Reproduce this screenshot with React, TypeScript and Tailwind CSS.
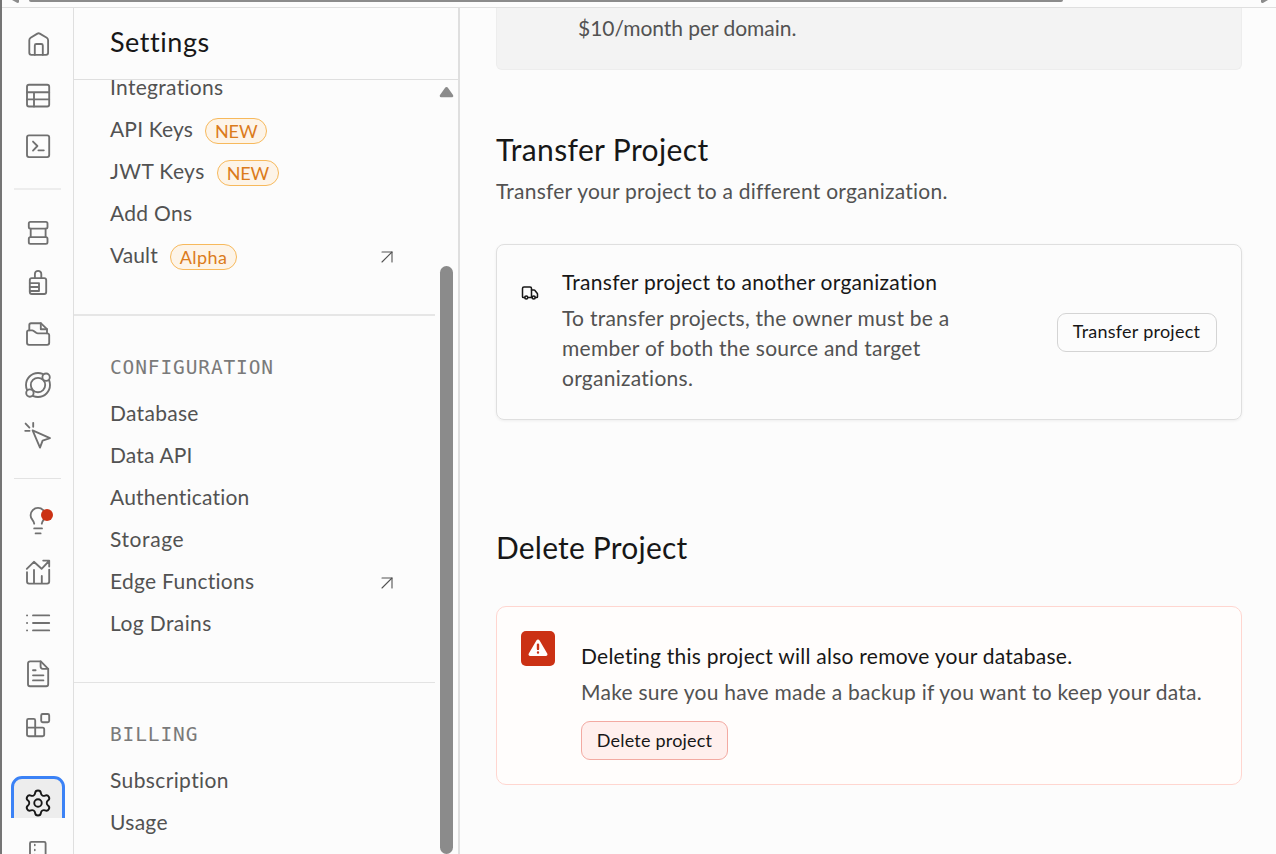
import type { ReactNode } from "react";
import { ArrowUpRight, Settings, Truck } from "lucide-react";

function RailIcon({ children }: { children: ReactNode }) {
  return (
    <svg
      width="30"
      height="30"
      viewBox="0 0 30 30"
      fill="none"
      stroke="#707070"
      strokeWidth="1.85"
      strokeLinecap="round"
      strokeLinejoin="round"
      className="shrink-0"
    >
      {children}
    </svg>
  );
}

function Rail() {
  return (
    <nav className="flex w-[72px] shrink-0 flex-col items-center overflow-hidden border-r border-[#dfdfdf] pt-[21px]">
      <div className="flex flex-col gap-[21px]">
        <RailIcon>
          <path d="M8.3 25.8 A2 2 0 0 1 6.3 23.8 V11.2 Q6.3 9.7 7.6 8.8 L14.4 4.6 Q15.6 3.9 16.8 4.6 L23.8 8.8 Q25.1 9.7 25.1 11.2 V23.8 A2 2 0 0 1 23.1 25.8 Z" />
          <path d="M11.8 25.8 V16.5 A1.5 1.5 0 0 1 13.3 15 H18.3 A1.5 1.5 0 0 1 19.8 16.5 V25.8" />
        </RailIcon>
        <RailIcon>
          <rect x="4" y="4.7" width="22.2" height="21.8" rx="2" />
          <path d="M4 12.2 H26.2 M4 19.4 H26.2 M11 12.2 V26.5" />
        </RailIcon>
        <RailIcon>
          <rect x="4" y="4.3" width="22.2" height="21.8" rx="2" />
          <path d="M10 10.6 L14.4 15 L10 19.6 M15.4 19.3 H20.8" />
        </RailIcon>
      </div>
      <div className="mt-[27px] h-[2px] w-[47px] shrink-0 bg-[#ededed]" />
      <div className="mt-[27px] flex flex-col gap-[21px]">
        <RailIcon>
          <rect x="5.8" y="4.8" width="18.7" height="6.8" rx="1.6" />
          <path d="M7.7 11.6 V20.1 M22.6 11.6 V20.1" />
          <rect x="5.8" y="20.1" width="18.7" height="6.7" rx="1.6" />
        </RailIcon>
        <RailIcon>
          <rect x="6.8" y="10.1" width="16.4" height="15.9" rx="2" />
          <path d="M11.9 10 V6 A3.2 3.2 0 0 1 18.3 6 V10 M6.8 15.1 H16 V23 H6.8 M6.8 19 H16" />
        </RailIcon>
        <RailIcon>
          <path d="M6.3 11.3 V6 A1.8 1.8 0 0 1 8.1 4.2 H17.8 L24 10.2 V14.3" />
          <path d="M17.8 4.2 V10.2 H24" />
          <path d="M4 13.2 A1.8 1.8 0 0 1 5.8 11.4 H9.2 Q10 11.4 10.7 11.9 L13.2 13.8 Q13.9 14.3 14.8 14.3 H24.2 A2 2 0 0 1 26.2 16.3 V23.8 A2 2 0 0 1 24.2 25.8 H6 A2 2 0 0 1 4 23.8 Z" />
        </RailIcon>
        <RailIcon>
          <circle cx="15" cy="15" r="12" />
          <circle cx="15" cy="15" r="7.2" />
          <circle cx="23.1" cy="7.2" r="3.7" fill="#fcfcfc" />
          <circle cx="6.9" cy="23" r="3.7" fill="#fcfcfc" />
        </RailIcon>
        <RailIcon>
          <path d="M9.6 9.4 L27 17.2 L19.6 19.6 L17 26.6 Z" />
          <path d="M10.2 1.8 V5.8 M2.2 9.8 H6.6 M2.6 2.6 L6.4 6.6" />
        </RailIcon>
      </div>
      <div className="mt-[27px] h-px w-[47px] shrink-0 bg-[#e3e3e3]" />
      <div className="mt-[27px] flex flex-col gap-[21px]">
        <div className="relative">
          <RailIcon>
            <path d="M11.2 17.6 C11.1 15.8 10.3 14.9 9.3 13.7 C8.2 12.4 7.6 11 7.6 9.3 A7.4 7.4 0 0 1 22.4 9.3 C22.4 11 21.8 12.4 20.7 13.7 C19.7 14.9 18.9 15.8 18.8 17.6" />
            <path d="M11.2 22.4 H19 M12.6 27.4 H17.6" />
          </RailIcon>
          <span className="absolute top-[3px] left-[18px] size-3 rounded-full bg-[#cb3114]" />
        </div>
        <RailIcon>
          <path d="M4 15.2 V24.6 A2 2 0 0 0 6 26.6 H24.2 A2 2 0 0 0 26.2 24.6 V12.6 M11 13 V26.6 M18.8 19 V26.6" />
          <path d="M3.8 11.8 L10.9 4.8 L18.6 11.8 L26 4 M20.2 3.6 H26.2 V9.6" />
        </RailIcon>
        <RailIcon>
          <path d="M4 7.4 H4.1 M4 15 H4.1 M4 22.4 H4.1 M10 7.4 H26.2 M10 15 H26.2 M10 22.4 H26.2" />
        </RailIcon>
        <RailIcon>
          <path d="M17.8 2.4 H7 A2 2 0 0 0 5 4.4 V25.2 A2 2 0 0 0 7 27.2 H23.2 A2 2 0 0 0 25.2 25.2 V9.8 Z" />
          <path d="M17.6 2.4 V7.6 A2.2 2.2 0 0 0 19.8 9.8 H25.2 M10 11.2 H12.6 M10 16.3 H20.4 M10 21.4 H20.4" />
        </RailIcon>
        <RailIcon>
          <rect x="18.2" y="4" width="8" height="8.2" rx="1.4" />
          <path d="M12.2 17.6 V10.4 A1.5 1.5 0 0 0 10.7 8.9 H5.5 A1.5 1.5 0 0 0 4 10.4 V24.6 A1.6 1.6 0 0 0 5.6 26.2 H19.6 A1.6 1.6 0 0 0 21.2 24.6 V19.2 A1.6 1.6 0 0 0 19.6 17.6 H4 M12.2 17.6 V26.2" />
        </RailIcon>
      </div>
      <div className="mt-9 h-[42px] w-[54px] shrink-0 overflow-hidden">
        <div className="flex h-[54px] items-center justify-center rounded-[11px] border-[3px] border-[#3b82f6] bg-[#ededed]">
          <Settings size={30} strokeWidth={1.5} className="text-[#171717]" />
        </div>
      </div>
      <div className="mt-[19px] h-[17px] shrink-0 overflow-hidden">
        <RailIcon>
          <rect x="7" y="4.8" width="15.6" height="22" rx="1.4" />
          <path d="M11.8 7.6 V24" strokeDasharray="0.8 4.2" strokeWidth="1.6" />
        </RailIcon>
      </div>
    </nav>
  );
}

function Badge({ children, tracking }: { children: ReactNode; tracking: string }) {
  return (
    <span
      className={`mt-1 ml-3 flex h-[26px] items-center rounded-full border border-[#f7b95c] bg-[#fdf4e8] px-[9px] text-[18px] leading-6 text-[#db7b1b] ${tracking}`}
    >
      {children}
    </span>
  );
}

function Item({
  label,
  tracking,
  badge,
  external,
}: {
  label: string;
  tracking: string;
  badge?: ReactNode;
  external?: boolean;
}) {
  return (
    <li className="flex h-[42px] items-center whitespace-nowrap pr-9 pl-9">
      <span className={tracking}>{label}</span>
      {badge}
      {external && (
        <ArrowUpRight size={24} strokeWidth={1.1} className="mt-1 ml-auto text-[#525252]" />
      )}
    </li>
  );
}

function GroupTitle({ children }: { children: ReactNode }) {
  return (
    <h3 className="flex h-[30px] items-center pt-[2px] pl-9 font-['DejaVu_Sans_Mono',monospace] text-[19.5px] tracking-[0.87px] text-[#7a7a7a]">
      {children}
    </h3>
  );
}

function Sidebar() {
  return (
    <aside className="flex w-[386px] shrink-0 flex-col border-r-2 border-[#dfdfdf]">
      <header className="flex h-[72px] shrink-0 items-center border-b border-[#dfdfdf] pb-[4px] pl-9">
        <h2 className="text-[27px] leading-none tracking-[0.55px] text-[#171717]">Settings</h2>
      </header>
      <div className="flex min-h-0 flex-1">
        <div className="w-[361px] overflow-hidden text-[21px] text-[#525252]">
          <ul className="-mt-[14px]">
            <Item label="Integrations" tracking="tracking-[0.3px]" />
            <Item
              label="API Keys"
              tracking="tracking-[0.15px]"
              badge={<Badge tracking="-tracking-[0.1px]">NEW</Badge>}
            />
            <Item
              label="JWT Keys"
              tracking="tracking-[0.4px]"
              badge={<Badge tracking="-tracking-[0.1px]">NEW</Badge>}
            />
            <Item label="Add Ons" tracking="tracking-[0.3px]" />
            <Item
              label="Vault"
              tracking="tracking-[0.1px]"
              badge={<Badge tracking="tracking-[0.4px]">Alpha</Badge>}
              external
            />
          </ul>
          <div className="mt-[38px] h-[2px] bg-[#e6e6e6]" />
          <div className="mt-9">
            <GroupTitle>CONFIGURATION</GroupTitle>
          </div>
          <ul className="mt-[10px]">
            <Item label="Database" tracking="tracking-[0.3px]" />
            <Item label="Data API" tracking="tracking-[0.15px]" />
            <Item label="Authentication" tracking="tracking-[0.2px]" />
            <Item label="Storage" tracking="tracking-[0.6px]" />
            <Item label="Edge Functions" tracking="tracking-[0.28px]" external />
            <Item label="Log Drains" tracking="tracking-[0.4px]" />
          </ul>
          <div className="mt-[38px] h-px bg-[#e3e3e3]" />
          <div className="mt-9">
            <GroupTitle>BILLING</GroupTitle>
          </div>
          <ul className="mt-[10px]">
            <Item label="Subscription" tracking="tracking-[0.38px]" />
            <Item label="Usage" tracking="tracking-[0.3px]" />
          </ul>
        </div>
        <div className="flex flex-1 flex-col items-center pt-[6px] pr-px">
          <svg width="15" height="12" viewBox="0 0 15 12" className="shrink-0">
            <path d="M7.5 2.5 L12.8 9.8 H2.2 Z" fill="#8b8b8b" stroke="#8b8b8b" strokeWidth="3" strokeLinejoin="round" />
          </svg>
          <div className="mt-[168px] h-[588px] w-[13px] shrink-0 rounded-full bg-[#8b8b8b]" />
        </div>
      </div>
    </aside>
  );
}

function Main() {
  return (
    <main className="flex min-w-0 flex-1 flex-col overflow-hidden pr-[34px] pl-9 text-[21px] text-[#525252]">
      <div className="h-[62px] shrink-0 rounded-b-md border border-t-0 border-[#ededed] bg-[#f3f3f3] pt-[5px] pl-[81px]">
        <p className="leading-[30px] tracking-[-0.05px]">$10/month per domain.</p>
      </div>

      <h2 className="mt-[59px] text-[30px] leading-10 tracking-[0.36px] text-[#171717]">Transfer Project</h2>
      <p className="mt-[7px] leading-[30px] tracking-[0.24px]">Transfer your project to a different organization.</p>

      <section className="mt-[38px] flex h-[176px] shrink-0 rounded-lg border border-[#dfdfdf] px-6 pt-[22px] shadow-[0_1px_3px_rgba(0,0,0,0.06)]">
        <Truck size={18} strokeWidth={2} className="mt-[17px] shrink-0 text-[#171717]" />
        <div className="ml-[23px] w-[440px]">
          <h3 className="leading-[30px] tracking-[0.27px] text-[#171717]">Transfer project to another organization</h3>
          <p className="mt-[6px] leading-[30px] tracking-[0.26px]">
            To transfer projects, the owner must be a
            <br />
            member of both the source and target
            <br />
            organizations.
          </p>
        </div>
        <button className="mt-[46px] ml-auto h-[39px] w-[160px] rounded-[9px] border border-[#d4d4d4] pr-px pb-[3px] text-[18px] leading-6 tracking-[0.25px] whitespace-nowrap text-[#171717]">
          Transfer project
        </button>
      </section>

      <h2 className="mt-[107px] text-[30px] leading-10 tracking-[0.2px] text-[#171717]">Delete Project</h2>

      <section className="mt-[39px] flex h-[179px] shrink-0 rounded-[10px] border border-[#ffd6d0] bg-[#fffdfc] px-6 pt-6">
        <div className="flex h-[35px] w-[34px] shrink-0 items-center justify-center rounded-[5px] bg-[#cb3114]">
          <svg width="20" height="18" viewBox="0 0 20 18" className="mb-px">
            <path
              d="M8.4 1.4 a1.8 1.8 0 0 1 3.2 0 L19.2 14.6 a1.6 1.6 0 0 1 -1.5 2.5 H2.3 a1.6 1.6 0 0 1 -1.5 -2.5 Z"
              fill="#fffdfc"
            />
            <path d="M10 5.6 V9.9 M10 13.4 V13.5" stroke="#cb3114" strokeWidth="2.4" strokeLinecap="round" />
          </svg>
        </div>
        <div className="ml-[26px] pt-[10px]">
          <h3 className="leading-[30px] tracking-[0.25px] text-[#171717]">
            Deleting this project will also remove your database.
          </h3>
          <p className="mt-[6px] leading-[30px] tracking-[0.26px]">
            Make sure you have made a backup if you want to keep your data.
          </p>
          <button className="mt-[14px] block h-[39px] w-[147px] rounded-[9px] border border-[#f3aaa2] bg-[#ffefed] pb-[2px] text-[18px] leading-6 tracking-[0.2px] whitespace-nowrap text-[#171717]">
            Delete project
          </button>
        </div>
      </section>
    </main>
  );
}

export default function App() {
  return (
    <div className="flex h-[854px] w-[1276px] flex-col overflow-hidden border-l-2 border-[#757575] bg-[#fcfcfc] font-['Lato','Liberation_Sans',sans-serif]">
      <div className="flex h-2 shrink-0 items-start justify-between border-b border-[#dfdfdf] pl-[9px]">
        <svg width="9" height="4" viewBox="0 0 9 4" className="shrink-0">
          <path d="M1 0 H8 V2 Q7.5 3.2 6 2.8 Z" fill="#8b8b8b" />
        </svg>
        <div className="ml-[9px] h-[2px] w-[1034px] rounded-b-[2px] bg-[#8b8b8b]" />
        <svg width="9" height="4" viewBox="0 0 9 4" className="mr-[7px] ml-auto shrink-0">
          <path d="M1 0 H8 L3.4 2.8 Q1.5 3.4 1 2 Z" fill="#8b8b8b" />
        </svg>
      </div>
      <div className="flex min-h-0 flex-1">
        <Rail />
        <Sidebar />
        <Main />
      </div>
    </div>
  );
}
